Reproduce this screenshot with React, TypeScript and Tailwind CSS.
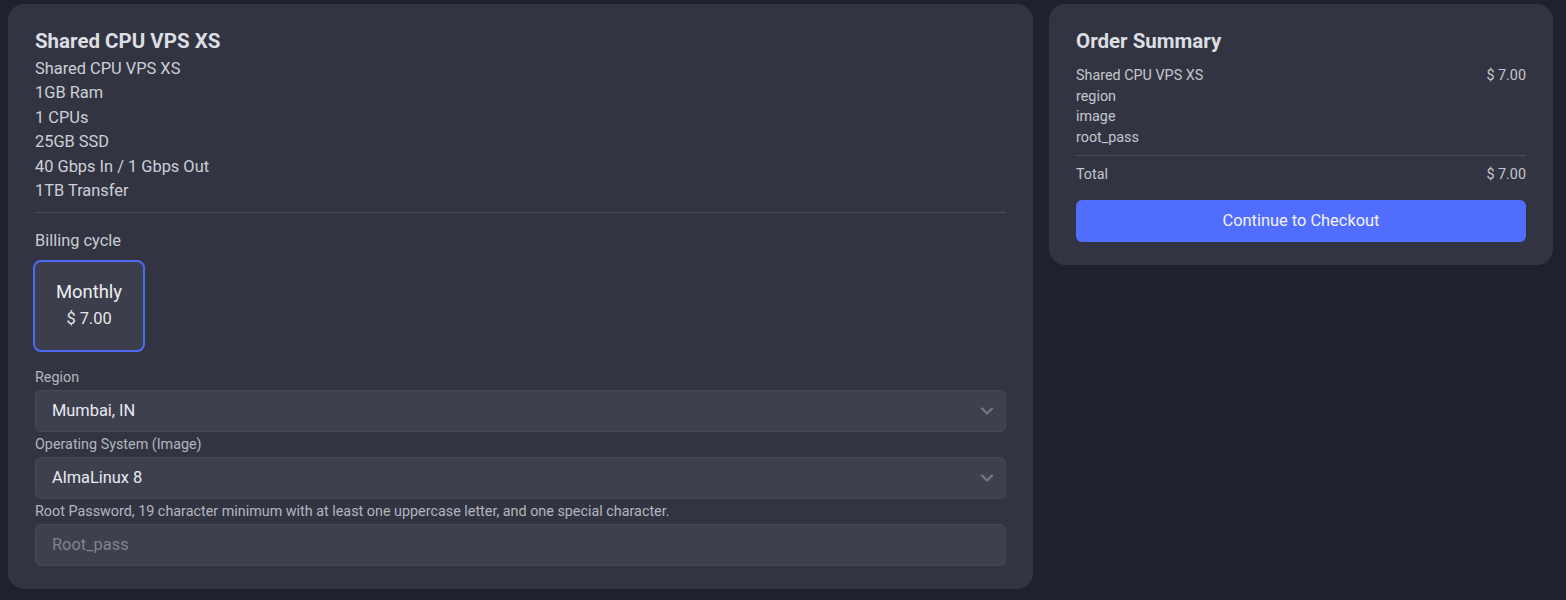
import React from "react";

function Chevron() {
  return (
    <svg width="14" height="10" viewBox="0 0 14 10" fill="none" stroke="#737684" strokeWidth="2.4" strokeLinecap="round" strokeLinejoin="round">
      <path d="M2 2.5l5 5 5-5" />
    </svg>
  );
}

function Field({ label, children }: { label: string; children: React.ReactNode }) {
  return (
    <div className="flex flex-col">
      <div className="pt-[1px] text-[14.35px] leading-[20.5px] text-[#b3b6bf] mb-[1.75px]">{label}</div>
      {children}
    </div>
  );
}

function Select({ value }: { value: string }) {
  return (
    <div className="h-[42px] rounded-md bg-[#3e404e] border border-[#464958] flex items-center justify-between pl-[16px] pr-[11px]">
      <span className="text-[16.4px] text-[#e8eaef]">{value}</span>
      <Chevron />
    </div>
  );
}

export default function App() {
  return (
    <div
      className="min-h-screen bg-[#1f212d] pl-2 pt-1 flex items-start gap-4"
      style={{ fontFamily: "Roboto, 'Noto Sans', sans-serif" }}
    >
      <div className="w-[1025px] rounded-2xl bg-[#323541] px-[27px] pt-[23px] pb-[23px]">
        <div className="text-[20.5px] leading-7 font-bold text-[#dcdee4]">Shared CPU VPS XS</div>
        <div className="pt-[1.5px] text-[16.4px] leading-[24.6px] text-[#ccd0d8]">
          <div>Shared CPU VPS XS</div>
          <div>1GB Ram</div>
          <div>1 CPUs</div>
          <div>25GB SSD</div>
          <div>40 Gbps In / 1 Gbps Out</div>
          <div>1TB Transfer</div>
        </div>
        <div className="mt-[7.5px] h-px bg-[#4a4d5a]" />
        <div className="mt-4 text-[16.4px] leading-[24.6px] text-[#c9ccd4]">Billing cycle</div>
        <div className="mt-[6.5px] -ml-[2px] w-[112px] h-[92px] rounded-lg border-2 border-[#4e6af5] bg-[#3c3e4c] flex flex-col items-center justify-center">
          <div className="text-[18.45px] leading-6 text-[#eceef2] mt-[-1px]">Monthly</div>
          <div className="text-[16.4px] leading-6 text-[#e4e6ea] mt-[3px]">$ 7.00</div>
        </div>
        <div className="mt-[15.5px] flex flex-col gap-[1.75px]">
          <Field label="Region">
            <Select value="Mumbai, IN" />
          </Field>
          <Field label="Operating System (Image)">
            <Select value="AlmaLinux 8" />
          </Field>
          <Field label="Root Password, 19 character minimum with at least one uppercase letter, and one special character.">
            <div className="h-[42px] rounded-md bg-[#3e404e] border border-[#464958] flex items-center pl-[16px]">
              <span className="text-[16.4px] text-[#80838e]">Root_pass</span>
            </div>
          </Field>
        </div>
      </div>

      <div className="w-[504px] rounded-2xl bg-[#323541] px-[27px] pt-[23px] pb-[23px]">
        <div className="text-[20.5px] leading-7 font-bold text-[#dcdee4]">Order Summary</div>
        <div className="mt-[11px] text-[14.35px] leading-[20.6px] text-[#c4c7cf]">
          <div className="flex justify-between">
            <span>Shared CPU VPS XS</span>
            <span>$ 7.00</span>
          </div>
          <div>region</div>
          <div>image</div>
          <div>root_pass</div>
        </div>
        <div className="mt-[7px] h-px bg-[#4a4d5a]" />
        <div className="mt-[8.5px] flex justify-between text-[14.35px] leading-[20.5px] text-[#c4c7cf]">
          <span>Total</span>
          <span>$ 7.00</span>
        </div>
        <div className="mt-[14.5px] h-[42px] rounded-md bg-[#516dfd] flex items-center justify-center text-[16.4px] text-[#f1f3ff]">
          Continue to Checkout
        </div>
      </div>
    </div>
  );
}
